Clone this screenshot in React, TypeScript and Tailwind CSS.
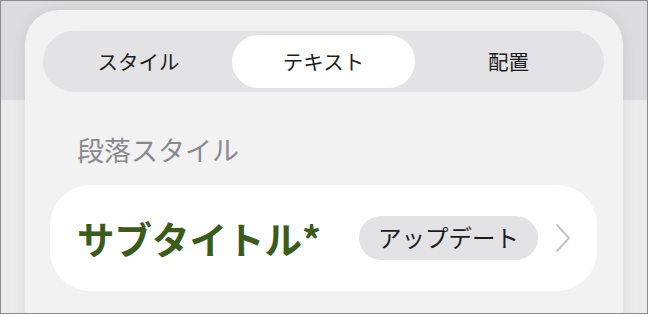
const TABS = [
  { id: "style", label: "スタイル" },
  { id: "text", label: "テキスト" },
  { id: "layout", label: "配置" },
];

const font = "font-['Noto_Sans_CJK_JP','Noto_Sans',sans-serif]";

export default function App() {
  const active = "text";

  return (
    <div className={`w-[649px] h-[317px] bg-white ${font}`}>
      {/* screenshot frame */}
      <div className="w-[648px] h-[314px] border border-[#8c8c8c] overflow-hidden bg-[linear-gradient(to_bottom,#dcdcdf_99px,#ebebec_99px)] pt-[9px] pl-[24px]">
        <div className="w-[598px] h-[320px] rounded-t-[34px] bg-[#f2f2f3] shadow-[0_0_14px_rgba(0,0,0,0.07)] px-[18px] pt-[21px]">
          {/* segmented control */}
          <div className="grid grid-cols-3 gap-[2px] h-[61px] w-[561px] p-[4px] rounded-full bg-[#e3e3e6]">
            {TABS.map((t) => (
              <div
                key={t.id}
                className={`flex items-center justify-center rounded-full text-[20.5px] text-[#1c1c1e] ${
                  t.id === active ? "bg-white" : ""
                }`}
              >
                {t.label}
              </div>
            ))}
          </div>

          <div className="pl-[34px] mt-[40px] text-[27px] leading-[36px] text-[#8a8a8e]">段落スタイル</div>

          {/* paragraph style row */}
          <div className="mt-[17px] ml-[7px] w-[547px] h-[106px] rounded-[40px] bg-white flex items-center pl-[27px] pr-[26px]">
            <span className="text-[37.5px] font-bold text-[#3b5b1d] leading-none">サブタイトル*</span>
            <span className="ml-auto h-[44px] px-[19px] flex items-center rounded-full bg-[#e3e3e6] text-[23.5px] text-[#1c1c1e]">
              アップデート
            </span>
            <svg className="ml-[17px]" width="16" height="30" viewBox="0 0 16 30" fill="none">
              <path d="M2 2 L14 15 L2 28" stroke="#c4c4c8" strokeWidth="2" strokeLinecap="round" strokeLinejoin="round" />
            </svg>
          </div>
        </div>
      </div>
    </div>
  );
}
